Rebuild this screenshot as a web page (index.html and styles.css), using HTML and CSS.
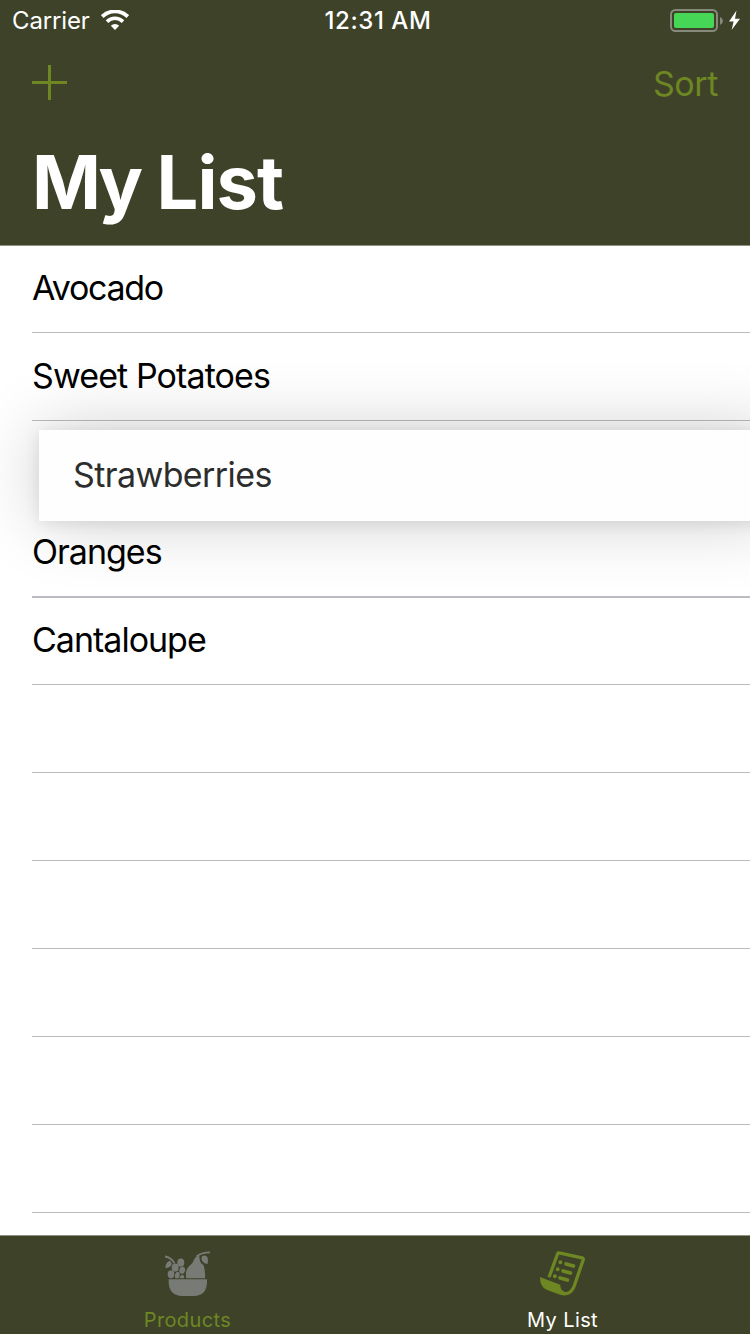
FILE: index.html
```html
<!DOCTYPE html>
<html lang="en">
<head>
<meta charset="utf-8">
<title>My List</title>
<link rel="stylesheet" href="styles.css">
</head>
<body>
<div class="screen">
  <header class="header">
    <div class="status">
      <div class="status-left">
        <span class="carrier">Carrier</span>
        <svg class="wifi" width="28" height="20" viewBox="0 0 28 20" fill="none">
          <path d="M1.200 6.600a18.300 18.300 0 0 1 25.600 0" stroke="#fff" stroke-width="3.800"/>
          <path d="M6 11.600a11.400 11.400 0 0 1 16 0" stroke="#fff" stroke-width="3.600"/>
          <path d="M14 20l-4.200-4.200a6 6 0 0 1 8.400 0z" fill="#fff"/>
        </svg>
      </div>
      <span class="time">12:31 AM</span>
      <div class="status-right">
        <svg class="battery" width="72" height="24" viewBox="0 0 72 24">
          <rect x="1" y="1" width="46" height="21" rx="4.500" fill="none" stroke="#868a7b" stroke-width="2"/>
          <rect x="4" y="4" width="40" height="15" rx="2" fill="#47d757"/>
          <path d="M50 8q3 1.500 3 4t-3 4z" fill="#868a7b"/>
          <path d="M66.500 1.500l-7.500 11h4.600l-2 8.500 8.400-11.200h-5z" fill="#fff"/>
        </svg>
      </div>
    </div>
    <div class="nav">
      <svg class="plus" width="35" height="35" viewBox="0 0 35 35"><path d="M0 17.500h35M17.500 0v35" stroke="#6e8723" stroke-width="3"/></svg>
      <span class="sort">Sort</span>
    </div>
    <h1 class="title"><span class="tight">My</span> List</h1>
  </header>
  <main class="list">
    <div class="row"><span class="avocado">Avocado</span></div>
    <div class="row"><span class="potatoes">Sweet Potatoes</span></div>
    <div class="row slot"><div class="drag">Strawberries</div></div>
    <div class="row thick">Oranges</div>
    <div class="row after-thick">Cantaloupe</div>
    <div class="row"></div>
    <div class="row"></div>
    <div class="row"></div>
    <div class="row"></div>
    <div class="row"></div>
    <div class="row"></div>
  </main>
  <footer class="tabs">
    <div class="tab">
      <svg width="45" height="46" viewBox="0 0 45 46" fill="#777a75">
        <path d="M3.700 28.300H42V31c0 9-5 14-13 14H17C9 45 3.700 40 3.700 31z"/>
        <path d="M21.200 27.200C20 20 22 16.500 26 13.500c3-2.300 3-8.800 8.300-8.800.3 3.300.3 7.300 4.200 9.300 1 4 1.800 6 1.500 13.200z"/>
        <path d="M31.500 5.500Q36 1.500 45 1.300M0 5.500q6 .7 9.500 6.700" fill="none" stroke="#777a75" stroke-width="1.800"/>
        <path d="M37 5.200q4-2 5.500 1.300 1 2.500.2 6.500-3.700-.3-5.400-2.700-1.500-2.500-.3-5.100z"/>
        <path d="M4.500 9.800q2.700 1.500 2 4-1 2.600-6 3.400-.5-5.200 4-7.400z"/>
        <ellipse cx="15.800" cy="11.700" rx="3.500" ry="4.100"/>
        <ellipse cx="10.200" cy="16.700" rx="3.500" ry="4.100"/>
        <ellipse cx="17.200" cy="19.300" rx="2.900" ry="3.600" transform="rotate(15 17.200 19.300)"/>
        <ellipse cx="6" cy="23.300" rx="3.300" ry="4.100"/>
        <path d="M10.200 27.200q-1-2 .2-4.700 1.500-2.500 3.500-1.300 2 1.800-.4 6zM14.300 27.200q1.200-3.500 3-3.500 2.200.3 2 3.500z"/>
      </svg>
      <span class="label products">Products</span>
    </div>
    <div class="tab">
      <svg width="45" height="46" viewBox="0 0 45 46" fill="none" stroke="#6e8723">
        <path d="M9 26.300L17.800 2.300Q18.200 1.700 19 1.900L42 6.900Q43.700 7.300 43.200 8.900L34.200 35q-2.800 7.800-9.700 7.800" stroke-width="3.300"/>
        <path d="M0 26L20.200 33.700q.3 6.400 5.600 7.500l-1 3.300q-2.300.1-4.600-.7L6.600 38.800Q0 36 0 26z" fill="#6e8723" stroke="none"/>
        <path d="M26 12.900l7.500 2.200M23 19.900l7.500 2.200M20 26.900l7.500 2.200" stroke-width="3.600" stroke-linecap="round"/>
        <path d="M20.400 11.200h.01M17.700 18.200h.01M14.900 25.300h.01" stroke-width="4" stroke-linecap="round"/>
      </svg>
      <span class="label mylist">My List</span>
    </div>
  </footer>
</div>
</body>
</html>
```
FILE: styles.css
```css
* { box-sizing: border-box; }
body { margin: 0; font-family: Inter, "Liberation Sans", sans-serif; }
.screen { width: 750px; height: 1334px; display: flex; flex-direction: column; overflow: hidden; background: #fff; }
.header { height: 246px; flex: none; background: #3d4229; border-bottom: 1px solid #8e9182; color: #fff; }
.status { height: 42px; display: grid; grid-template-columns: 1fr auto 1fr; align-items: center; padding: 0 8px 0 12px; }
.status-left { display: flex; align-items: center; gap: 11px; }
.carrier { font-size: 24px; line-height: 42px; letter-spacing: -0.15px; }
.time { padding-left: 2px; font-size: 24px; font-weight: 500; line-height: 42px; letter-spacing: 0.55px; }
.status-right { display: flex; justify-content: flex-end; }
.wifi, .battery { display: block; }
.wifi { margin-top: -2px; }
.nav { height: 84px; display: flex; justify-content: space-between; align-items: center; padding: 0 32px; }
.plus { margin-top: -3px; }
.sort { margin-top: -1px; font-size: 34px; letter-spacing: -0.4px; color: #6e8723; }
.title { margin: 2px 0 0; padding-left: 32px; font-size: 74px; line-height: 108px; font-weight: 700; letter-spacing: -0.9px; }
.tight { letter-spacing: -3.2px; }
.list { height: 990px; flex: none; margin-top: -1px; position: relative; overflow: hidden; }
.row { height: 88px; margin-left: 32px; border-bottom: 1px solid #bcbbc1; font-size: 34px; line-height: 86px; letter-spacing: -1px; }
.avocado { letter-spacing: -1.3px; }
.potatoes { letter-spacing: -0.9px; }
.row.thick { height: 89px; border-bottom-width: 2px; }
.row.after-thick { height: 87px; line-height: 84px; }
.slot { border-bottom: 0; padding: 9px 0 0 7px; }
.drag { position: relative; width: 739px; height: 91px; padding-left: 34px; line-height: 90px; letter-spacing: -0.6px; background: #fefefe; color: #2d2d2d; box-shadow: 0 0 70px rgba(0,0,0,.2), 0 2px 14px rgba(0,0,0,.09); }
.tabs { flex: none; height: 99px; display: grid; grid-template-columns: 1fr 1fr; background: #3d4229; border-top: 1px solid #8e9182; }
.tab { display: flex; flex-direction: column; align-items: center; padding-top: 15px; gap: 11px; }
.tab svg { display: block; }
.label { font-size: 20px; line-height: 24px; letter-spacing: 0.4px; }
.products { color: #6e8723; }
.mylist { color: #fff; }
```
